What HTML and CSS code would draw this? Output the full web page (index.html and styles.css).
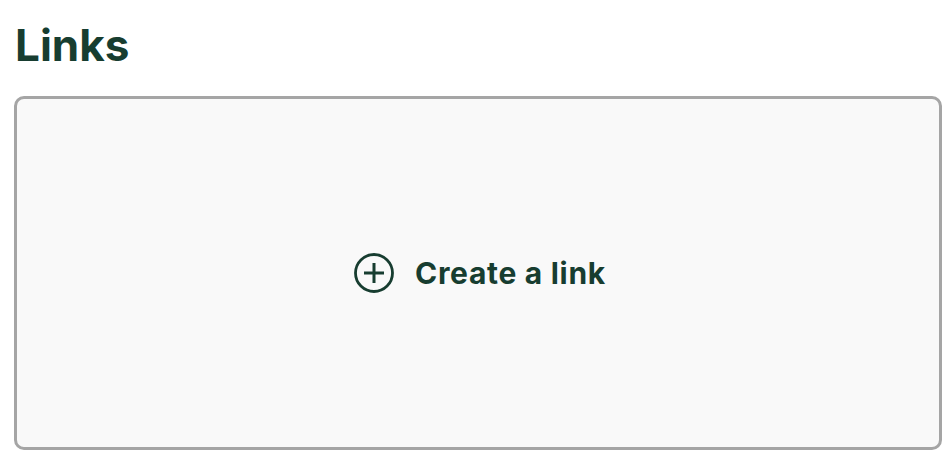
FILE: index.html
```html
<!DOCTYPE html>
<html>
<head>
<meta charset="utf-8">
<link rel="stylesheet" href="styles.css">
</head>
<body>
<main class="page">
  <h1 class="title">Links</h1>
  <button class="create-box" type="button">
    <span class="create-inner">
      <svg class="plus-icon" viewBox="0 0 40 40" width="40" height="40" aria-hidden="true">
        <circle cx="20" cy="20" r="18.5" fill="none" stroke="currentColor" stroke-width="2.8"/>
        <path d="M20 10v20M10 20h20" stroke="currentColor" stroke-width="3" stroke-linecap="butt"/>
      </svg>
      <span class="create-label">Create a link</span>
    </span>
  </button>
</main>
</body>
</html>
```

FILE: styles.css
```css
html, body {
  margin: 0;
  padding: 0;
  background: #ffffff;
}
.page {
  padding: 20px 10px 14px 14px;
  font-family: Inter, "Liberation Sans", sans-serif;
  color: #173d30;
}
.title {
  margin: 0 0 26px 1px;
  font-size: 44px;
  line-height: 50px;
  font-weight: 700;
  letter-spacing: 0;
}
.create-box {
  display: flex;
  align-items: center;
  justify-content: center;
  width: 928px;
  height: 354px;
  box-sizing: border-box;
  border: 3px solid #a5a5a5;
  border-radius: 10px;
  background: #f9f9f9;
  color: #173d30;
  font-family: inherit;
  padding: 0 0 0 4px;
  cursor: pointer;
}
.create-inner {
  display: flex;
  align-items: center;
  gap: 21px;
}
.plus-icon {
  display: block;
}
.create-label {
  font-size: 30px;
  font-weight: 700;
  letter-spacing: 0.7px;
}
```
